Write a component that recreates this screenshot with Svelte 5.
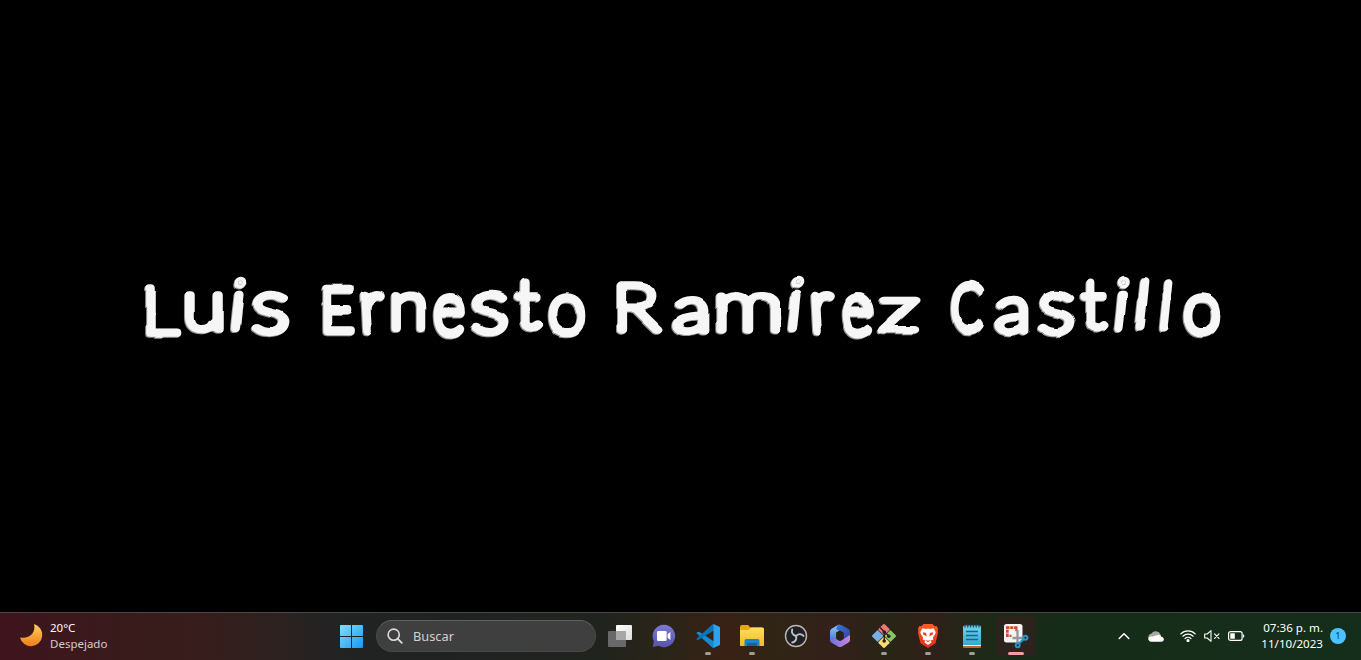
<script>
  // Each letter of the banner with the box it fills: x0, y0, x1, y1 and its slant.
  const words = [
    { text: 'Luis', boxes: [[146, 284, 181, 337, 0], [185, 291, 223, 334, 0], [231, 276, 246, 332, -6], [251, 290, 290, 337, 0]] },
    { text: 'Ernesto', boxes: [[322, 284, 355, 335, 0], [360, 291, 387, 335, 3], [391, 291, 426, 332, 0], [433, 293, 466, 338, 0], [471, 290, 509, 337, 0], [514, 278, 543, 332, 0], [548, 293, 586, 337, 0]] },
    { text: 'Ramirez', boxes: [[617, 280, 662, 334, 0], [672, 296, 708, 336, 0], [716, 291, 780, 334, 0], [788, 276, 803, 332, -6], [810, 291, 837, 335, 3], [841, 293, 874, 338, 0], [878, 297, 920, 334, 0]] },
    { text: 'Castillo', boxes: [[950, 281, 985, 335, 0], [994, 296, 1029, 336, 0], [1037, 290, 1075, 337, 0], [1080, 278, 1108, 332, 0], [1114, 276, 1130, 332, -6], [1135, 278, 1151, 331, -6], [1159, 278, 1175, 331, -6], [1183, 293, 1221, 337, 0]] }
  ];
  const ctx = document.createElement('canvas').getContext('2d');
  ctx.font = '100 72px Lato';
  const bar = ctx.measureText('l');
  const stemWidth = bar.actualBoundingBoxLeft + bar.actualBoundingBoxRight;
  const pen = Math.max(2, 9.2 - stemWidth);
  const ink = pen / 2;
  function place(ch, [x0, y0, x1, y1, slant]) {
    const m = ctx.measureText(ch);
    const l = -m.actualBoundingBoxLeft, r = m.actualBoundingBoxRight;
    const t = -m.actualBoundingBoxAscent, b = m.actualBoundingBoxDescent;
    const lean = Math.tan((-slant * Math.PI) / 180) * (y1 - y0);
    const w = x1 - x0 - Math.abs(lean) - ink * 2;
    const sy = (y1 - y0 - ink * 2) / (b - t);
    const stem = ch === 'i' || ch === 'l';
    const sx = stem ? sy : w / (r - l);
    const left = stem ? (x0 + x1 - lean - (r - l) * sx) / 2 : x0 + ink + Math.max(0, -lean);
    return {
      transform: `translate(${left} ${y1 - ink}) skewX(${slant}) scale(${sx} ${sy}) translate(${-l} ${-b})`,
      'stroke-width': pen / Math.sqrt(sx * sy)
    };
  }
</script>

{#snippet icon(name)}
  <svg class="ico" viewBox="0 0 24 24">
    {#if name === 'tasks'}
      <rect x="8" y="1" width="16" height="15" rx="1" fill="url(#tvA)" />
      <rect x="0" y="7" width="18" height="16" rx="1" fill="#686968" />
      <path d="M8 7h10v9H8z" fill="#a6a7a6" />
    {:else if name === 'chat'}
      <path d="M12 .8a11.2 11.2 0 1 1-5.4 21L.7 23l1.2-5.7A11.2 11.2 0 0 1 12 .8z" fill="url(#chatG)" />
      <rect x="5" y="7" width="9.6" height="10" rx="1.2" fill="#fff" />
      <path d="M15.6 10.3l2.8-2.2v7.8l-2.8-2.2z" fill="#fff" />
    {:else if name === 'code'}
      <path d="M1.700 7.900L.2 9l16.100 14.500 1.700.5V17.500L3.300 7.800z" fill="#138bd2" />
      <path d="M.2 15l1.500 1.200L18 6.500V0l-1.700.6z" fill="#0a74b9" />
      <path d="M17.500 0L24 3v18l-6.500 3z" fill="#2ba4ed" />
    {:else if name === 'folder'}
      <path d="M0 3a2 2 0 0 1 2-2h6l2.500 2.500H22a2 2 0 0 1 2 2V10H0z" fill="#e8a517" />
      <path d="M0 6h8.500l2.500-2.500h11a2 2 0 0 1 2 2V22H0z" fill="url(#foldG)" />
      <path d="M4.500 22v-5a2 2 0 0 1 2-2h11a2 2 0 0 1 2 2v5z" fill="#1686d0" />
      <path d="M7 19h10v3H7z" fill="#0d64aa" />
    {:else if name === 'obs'}
      <circle cx="12" cy="12" r="10.500" fill="#202124" stroke="#b9b7b5" stroke-width="1.400" />
      <g fill="none" stroke="#bfc0c2" stroke-width="1.900" stroke-linecap="round">
        {#each [0, 120, 240] as turn}
          <path d="M12 12c-2.800-.6-5-3-3.800-6.500" transform="rotate({turn} 12 12)" />
        {/each}
      </g>
    {:else if name === 'm365'}
      <path d="M10 1L3.500 4.800A3.500 3.500 0 0 0 2 8v8.500L8.300 20V8.800l5.200-3.300V1.700A4 4 0 0 0 10 1z" fill="url(#mA)" />
      <path d="M10 1c2-.7 3-.3 4.600.7L20.500 5A3 3 0 0 1 22 8v7.500l-6.500 1V9L8 5z" fill="url(#mB)" />
      <path d="M2 16l6.300-1.500L12 17l3.500-2L22 11v5a3 3 0 0 1-1.500 2.500l-6.500 4a4 4 0 0 1-4 0l-6.500-3.800A3 3 0 0 1 2 16z" fill="url(#mC)" />
      <path d="M8.300 8.500L12 6.600l3.700 2.200v6L12 17l-3.700-2z" fill="#2a211a" />
    {:else if name === 'git'}
      <g transform="rotate(45 12 12)">
        <rect x="3.200" y="3.200" width="8.500" height="8.500" rx="1" fill="#f0777b" />
        <rect x="12.300" y="3.200" width="8.500" height="8.500" rx="1" fill="#88c765" />
        <rect x="3.200" y="12.300" width="8.500" height="8.500" rx="1" fill="#79afe5" />
        <rect x="12.300" y="12.300" width="8.500" height="8.500" rx="1" fill="#f7dc6f" />
      </g>
      <path d="M8 3.500l4.300 4.300v9M12.300 7.800l4.500 4.200" fill="none" stroke="#282219" stroke-width="1.400" />
      <circle cx="12.200" cy="8" r="1.800" fill="#282219" /><circle cx="12.200" cy="17" r="1.800" fill="#282219" /><circle cx="16.800" cy="12.200" r="1.800" fill="#282219" />
    {:else if name === 'brave'}
      <path d="M7.500 0h9l2 2.200 2.200-.3 1.300 2.900-.3 2.200.3 2-2.500 10.200L12 24l-7.500-4.800L2 9l.3-2L2 4.800l1.300-2.900 2.200.3z" fill="url(#braveG)" />
      <path d="M6.500 4.300l3.200.8 2.300-.7 2.300.7 3.200-.8 2.300 4-1 2.500-1.800 2.500.3 2.200-2.800 1.200 1.200 1.500L12 21l-3.700-2.800 1.200-1.500-2.800-1.200.3-2.200-1.800-2.500-1-2.500z" fill="#fff" />
      <path d="M7 8.200l3.200.8.400 3.800-1.700-1.600-1.500-.5zM17 8.200l-3.200.8-.4 3.800 1.700-1.600 1.500-.5zM9.200 16l2.800.8 2.800-.8-2.800 2.200z" fill="#e63c20" />
    {:else if name === 'notes'}
      <rect x="3" y="3" width="18" height="20" rx="1.500" fill="#e9eef0" />
      <path d="M3 22h18v1a1 1 0 0 1-1 1H4a1 1 0 0 1-1-1z" fill="#b86a2c" />
      <path d="M3 3a1.500 1.500 0 0 1 1.500-1.500h15A1.500 1.500 0 0 1 21 3v18H3z" fill="url(#noteG)" />
      <path d="M5 .5v3M7.800.5v3M10.600.5v3M13.400.5v3M16.200.5v3M19 .5v3" stroke="#174f65" stroke-width="1.300" />
      <path d="M6 7.500h12M6 11.500h12M6 15.500h12" stroke="#12678a" stroke-width="1.400" />
    {:else if name === 'snip'}
      <rect x="0" y="0" width="18.500" height="18.500" rx="2.500" fill="#f6f4f4" />
      <path d="M2 2.300h3.500v2.700H2zM6.300 2.300h3v2.700h-3zM10.100 2.300h3.400v5h-2.200V5h-1.200zM2 5.800h2.700v3H2zM2 9.600h2.700v3.400H2zM5.500 10.700h2v2.300h-2z" fill="#cf4a30" />
      <path d="M13.500 6v13M8.500 14H20" stroke="#8f999e" stroke-width="2.300" />
      <circle cx="21.400" cy="13.800" r="2" fill="none" stroke="#2794cc" stroke-width="2" />
      <circle cx="13.700" cy="21.300" r="2" fill="none" stroke="#2794cc" stroke-width="2" />
      <path d="M14.800 19.500l5-4.500" stroke="#2794cc" stroke-width="2.200" />
    {/if}
  </svg>
{/snippet}

<svg class="defs" width="0" height="0">
  <defs>
    <linearGradient id="tvA" x2="1" y2="1"><stop stop-color="#fff" /><stop offset="1" stop-color="#dedede" /></linearGradient>
    <linearGradient id="chatG" x2="0" y2="1"><stop stop-color="#7a79d8" /><stop offset="1" stop-color="#5654aa" /></linearGradient>
    <linearGradient id="foldG" x2="0" y2="1"><stop stop-color="#ffdc62" /><stop offset="1" stop-color="#f5b928" /></linearGradient>
    <linearGradient id="braveG" x2="0" y2="1"><stop stop-color="#ff5b22" /><stop offset="1" stop-color="#e52d18" /></linearGradient>
    <linearGradient id="noteG" x2="0" y2="1"><stop stop-color="#71d5ed" /><stop offset="1" stop-color="#35a9d2" /></linearGradient>
    <linearGradient id="mA" x2="0" y2="1"><stop stop-color="#8ccdf6" /><stop offset="1" stop-color="#4660cf" /></linearGradient>
    <linearGradient id="mB" x2="1" y2="1"><stop stop-color="#3476d9" /><stop offset="1" stop-color="#383ca3" /></linearGradient>
    <linearGradient id="mC" x2="1"><stop stop-color="#6d6fdc" /><stop offset="1" stop-color="#c686dc" /></linearGradient>
    <linearGradient id="winG" x2="1" y2="1"><stop stop-color="#83ddff" /><stop offset="1" stop-color="#1698ef" /></linearGradient>
    <linearGradient id="moonG" x2="0" y2="1"><stop stop-color="#ffd15c" /><stop offset="1" stop-color="#ee7f19" /></linearGradient>
  </defs>
</svg>

<div class="desktop">
  <main>
    <svg class="banner" width="1361" height="612" viewBox="0 0 1361 612">
      <defs>
        <filter id="brush" x="130" y="260" width="1110" height="90" filterUnits="userSpaceOnUse" color-interpolation-filters="sRGB">
          <feTurbulence type="fractalNoise" baseFrequency="0.06 0.03" numOctaves="1" seed="4" result="n" />
          <feDisplacementMap in="SourceGraphic" in2="n" scale="4" xChannelSelector="R" yChannelSelector="G" result="d" />
          <feOffset in="d" dx="-0.8" dy="0.8" result="o" />
          <feColorMatrix in="o" type="matrix" values=".6 0 0 0 0 0 .6 0 0 0 0 0 .6 0 0 0 0 0 1 0" result="s" />
          <feMerge><feMergeNode in="s" /><feMergeNode in="d" /></feMerge>
        </filter>
      </defs>
      <g class="letters" filter="url(#brush)">
        {#each words as word}
          <g>{#each word.text as ch, i}<text {...place(ch, word.boxes[i])}>{ch}</text>{/each}</g>
        {/each}
      </g>
    </svg>
  </main>

  <footer>
    <div class="weather">
      <svg width="24" height="24" viewBox="0 0 24 24"><path d="M14 1a11.300 11.300 0 1 1-14 13.500C8.500 16.500 16.500 10 14 1z" fill="url(#moonG)" /></svg>
      <div><b>20°C</b><span class="cond">Despejado</span></div>
    </div>
    <div class="start">
      <svg width="23" height="23" viewBox="0 0 23 23"><path d="M1 0h10v11H0V1a1 1 0 0 1 1-1zM12 0h10a1 1 0 0 1 1 1v10H12zM0 12h11v11H1a1 1 0 0 1-1-1zM12 12h11v10a1 1 0 0 1-1 1H12z" fill="url(#winG)" /></svg>
    </div>
    <div class="search">
      <svg width="16" height="16" viewBox="0 0 16 16"><circle cx="6.700" cy="6.700" r="5.600" fill="none" stroke="#dcdcdc" stroke-width="1.600" /><path d="M10.800 10.800l4 4" stroke="#dcdcdc" stroke-width="1.800" stroke-linecap="round" /></svg>
      <span>Buscar</span>
    </div>
    <nav>
      {#each ['tasks', 'chat', 'code', 'folder', 'obs', 'm365', 'git', 'brave', 'notes', 'snip'] as name}
        <div class="app" class:active={name === 'snip'} class:open={['code', 'folder', 'git', 'brave', 'notes'].includes(name)}>{@render icon(name)}<i></i></div>
      {/each}
    </nav>
    <div class="tray">
      <svg width="12" height="8" viewBox="0 0 12 8" fill="none" stroke="#fff" stroke-width="1.500" stroke-linecap="round" stroke-linejoin="round"><path d="M1.200 6.500L6 1.700l4.800 4.800" /></svg>
      <svg class="cloud" width="16" height="11" viewBox="0 0 16 11"><path d="M1.500 9A3.700 3.700 0 0 1 3.500 2.600 5 5 0 0 1 12.500 3.500L13 6z" fill="#a7aba7" /><path d="M3 10.800a2.800 2.800 0 0 1-2-4.600c1-1 2.500-.8 4-.7L9.500 4c2.200-.6 3.600.8 3.800 1.700 3.600.3 3.200 5.100 0 5.100z" fill="#fff" /></svg>
      <svg class="wifi" width="16" height="12" viewBox="0 0 16 12" fill="none" stroke="#fff" stroke-width="1.200" stroke-linecap="round"><path d="M.8 3.800a10.200 10.200 0 0 1 14.400 0M2.900 6.200a7.300 7.300 0 0 1 10.200 0M5.100 8.500a4.200 4.200 0 0 1 5.800 0" /><circle cx="8" cy="10.500" r="1" fill="#fff" /></svg>
      <svg class="mute" width="16" height="12" viewBox="0 0 16 12" fill="none" stroke="#fff" stroke-width="1.100" stroke-linecap="round" stroke-linejoin="round"><path d="M.7 4h2.500L7 .7v10.600L3.200 8H.7zM10.500 3.800l4.500 4.500M15 3.800l-4.500 4.500" /></svg>
      <svg class="batt" width="17" height="10" viewBox="0 0 17 10"><rect x=".6" y=".6" width="13.500" height="8.800" rx="2" fill="none" stroke="#fff" stroke-width="1.200" /><path d="M2.300 2.300h4.500v5.400H2.300zM15 3.300q1.300 0 1.300 1.700T15 6.700z" fill="#fff" /></svg>
      <div class="clock"><span class="time">07:36 p. m.</span><span class="date">11/10/2023</span></div>
      <div class="badge">1</div>
    </div>
  </footer>
</div>

<style>
  :global(body) { margin: 0; background: #000; }
  .defs { position: absolute; }
  .desktop { width: 1361px; height: 660px; display: flex; flex-direction: column; background: #000; overflow: hidden; font-family: 'Noto Sans', sans-serif; }
  main { height: 612px; }
  svg { display: block; flex: none; }
  .letters { font: 100 72px Lato, sans-serif; fill: #f6f6f6; stroke: #f6f6f6; stroke-linejoin: round; }
  footer {
    box-sizing: border-box; height: 48px; padding-bottom: 1px; border-top: 1px solid #4b4846; display: flex; align-items: center; color: #fff; font-size: 12px;
    background: linear-gradient(90deg, #3f141d 0, #3a1a1c 100px, #371d1c 200px, #2d2220 275px, #222323 335px, #202222 450px, #20241e 600px, #2b2419 670px, #392114 725px, #2f2515 775px, #33201a 835px, #282516 890px, #302019 930px, #1f2918 980px, #152c18 1060px, #152e1b 1361px);
  }
  .weather { width: 312px; padding-left: 20px; display: flex; gap: 6px; align-items: center; }
  .weather svg { margin-top: -2px; }
  .weather b, .weather span, .clock span { display: block; font-weight: 400; line-height: 16px; white-space: nowrap; }
  .weather b { font-size: 11.500px; }
  .weather .cond { color: #d5cccd; font-size: 11.500px; }
  .start { width: 44px; padding: 1px 0 0 8px; box-sizing: border-box; }
  .search { box-sizing: border-box; width: 220px; height: 32px; border-radius: 16px; margin-right: 2px; padding-left: 10px; display: flex; align-items: center; gap: 10px; background: #3f3f3f; border: 1px solid #484848; border-top-color: #606060; color: #d0d0d0; font-size: 12.800px; }
  nav { display: flex; }
  .app { width: 44px; height: 46px; display: flex; flex-direction: column; align-items: center; justify-content: center; position: relative; }
  .app.active::before { content: ''; position: absolute; inset: 3px 2px 3px; border-radius: 4px; background: #32221fcc; }
  .ico { width: 24px; height: 24px; position: relative; overflow: visible; }
  .app i { position: absolute; bottom: 4px; width: 6px; height: 3px; border-radius: 2px; }
  .app.open i { background: #a09d95; }
  .app.active i { width: 16px; background: #f39ba4; }
  .tray { flex: 1; display: flex; align-items: center; padding-left: 80px; }
  .cloud { margin-left: 18px; }
  .wifi { margin-left: 16px; }
  .mute { margin-left: 8px; }
  .batt { margin-left: 8px; }
  .clock { width: 78px; text-align: right; font-size: 11.600px; }
  .badge { width: 16px; height: 16px; border-radius: 50%; background: #4cc2ff; color: #123a4c; margin-left: 7px; font-size: 9.500px; line-height: 16px; text-align: center; }
</style>
